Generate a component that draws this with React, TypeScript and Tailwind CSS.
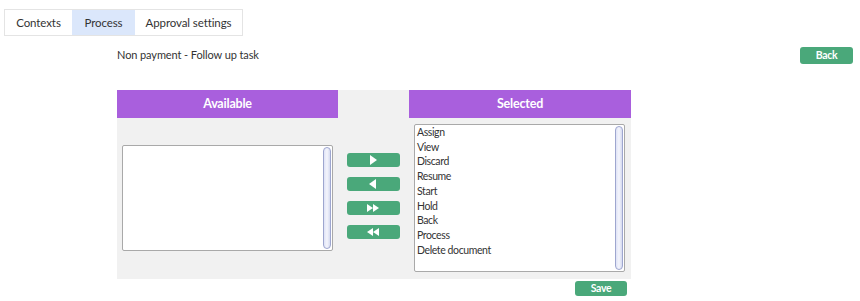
import React from 'react';

const selected = ['Assign', 'View', 'Discard', 'Resume', 'Start', 'Hold', 'Back', 'Process', 'Delete document'];

function Scrollbar() {
  return (
    <div className="absolute right-[1px] top-[1px] bottom-[1px] w-[8px] rounded-full border border-[#9ea6cf] bg-gradient-to-r from-[#dfe3f6] via-[#f4f5fc] to-[#d5daf0]" />
  );
}

function ListBox({ items, className }: { items: string[]; className: string }) {
  return (
    <div className={`relative bg-white border border-[#a9a9a9] rounded-[2px] ${className}`}>
      <ul className="pl-[2px] text-[10.5px] tracking-[-0.4px] leading-[14.7px] text-[#333]">
        {items.map((i) => (
          <li key={i}>{i}</li>
        ))}
      </ul>
      <Scrollbar />
    </div>
  );
}

function ArrowBtn({ children }: { children: React.ReactNode }) {
  return (
    <button className="w-[53px] h-[14px] rounded-[3px] bg-[#4aa87a] flex items-center justify-center text-white">
      {children}
    </button>
  );
}

export default function App() {
  return (
    <div className="w-[860px] h-[301px] bg-white font-['Lato',sans-serif] text-[#333] overflow-hidden">
      <div className="ml-[4px] pt-[9px] flex">
        <div className="flex border border-[#e4e4e4] h-[27px] text-[11.5px] tracking-[-0.1px]">
          <div className="w-[67px] flex items-center justify-center">Contexts</div>
          <div className="w-[63px] flex items-center justify-center bg-[#dbe7fb]">Process</div>
          <div className="w-[107px] flex items-center justify-center">Approval settings</div>
        </div>
      </div>

      <div className="flex items-center mt-[11px] h-[17px]">
        <div className="ml-[117px] text-[11px] tracking-[-0.1px]">Non payment - Follow up task</div>
        <button className="ml-auto mr-[7px] w-[53px] h-[17px] rounded-[3px] bg-[#4aa87a] text-white text-[10.5px] font-bold tracking-[-0.3px]">
          Back
        </button>
      </div>

      <div className="ml-[117px] mt-[26px] w-[514px]">
        <div className="grid grid-cols-[221px_71px_222px] bg-[#f1f1f1] h-[189px] grid-rows-[28px_161px]">
          <div className="bg-[#a95fdd] text-white font-bold text-[12.5px] tracking-[-0.2px] flex items-center justify-center">
            Available
          </div>
          <div />
          <div className="bg-[#a95fdd] text-white font-bold text-[12.5px] tracking-[-0.2px] flex items-center justify-center">
            Selected
          </div>

          <div className="pl-[5px] pt-[27px]">
            <ListBox items={[]} className="w-[211px] h-[106px]" />
          </div>
          <div className="flex flex-col items-center pt-[35px] gap-[10px] pr-[1px]">
            <ArrowBtn>
              <svg width="8" height="10" viewBox="0 0 8 10"><path d="M1 0 L8 5 L1 10 Z" fill="white" /></svg>
            </ArrowBtn>
            <ArrowBtn>
              <svg width="8" height="10" viewBox="0 0 8 10"><path d="M7 0 L0 5 L7 10 Z" fill="white" /></svg>
            </ArrowBtn>
            <ArrowBtn>
              <svg width="12" height="8" viewBox="0 0 12 8"><path d="M0 0 L6 4 L0 8 Z M6 0 L12 4 L6 8 Z" fill="white" /></svg>
            </ArrowBtn>
            <ArrowBtn>
              <svg width="12" height="8" viewBox="0 0 12 8"><path d="M6 0 L0 4 L6 8 Z M12 0 L6 4 L12 8 Z" fill="white" /></svg>
            </ArrowBtn>
          </div>
          <div className="pl-[5px] pt-[6px]">
            <ListBox items={selected} className="w-[211px] h-[148px]" />
          </div>
        </div>
        <div className="flex justify-end pr-[4px] mt-[2px]">
          <button className="w-[52px] h-[15px] rounded-[3px] bg-[#4aa87a] text-white text-[10.5px] font-bold tracking-[-0.3px]">
            Save
          </button>
        </div>
      </div>
    </div>
  );
}
